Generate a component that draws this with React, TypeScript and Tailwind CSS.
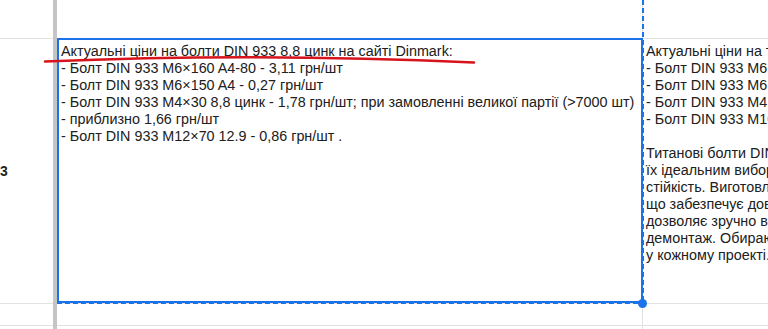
import React from 'react';

const leftLines = [
  'Актуальні ціни на болти DIN 933 8,8 цинк на сайті Dinmark:',
  '- Болт DIN 933 M6×160 A4-80 - 3,11 грн/шт',
  '- Болт DIN 933 M6×150 A4 - 0,27 грн/шт',
  '- Болт DIN 933 M4×30 8,8 цинк - 1,78 грн/шт; при замовленні великої партії (>7000 шт)',
  '- приблизно 1,66 грн/шт',
  '- Болт DIN 933 M12×70 12.9 - 0,86 грн/шт .',
];

const rightLines = [
  'Актуальні ціни на титанові болти DIN 933:',
  '- Болт DIN 933 M6×20 титан - 48,50 грн/шт',
  '- Болт DIN 933 M6×30 титан - 56,20 грн/шт',
  '- Болт DIN 933 M4×12 титан - 21,40 грн/шт',
  '- Болт DIN 933 M10×40 титан - 142,00 грн/шт',
  '',
  'Титанові болти DIN 933 відрізняються високою міцністю та малою вагою, що робить',
  'їх ідеальним вибором для авіації, медицини та хімічної промисловості. Вони мають',
  'стійкість. Виготовлені за стандартом DIN 933, ці болти мають повну різьбу,',
  'що забезпечує довговічне та надійне з\'єднання. Шестигранна головка',
  'дозволяє зручно встановлювати болт гайковим ключем та легко виконувати',
  'демонтаж. Обираючи титанові болти DIN 933, ви отримуєте надійність',
  'у кожному проекті.',
];

const App: React.FC = () => {
  return (
    <div className="relative w-[768px] h-[329px] overflow-hidden bg-white flex font-['Liberation_Sans',Arial,sans-serif] text-[14.35px] leading-[17px] text-[#202020]">
      {/* row headers */}
      <div className="w-[53px] shrink-0 flex flex-col">
        <div className="h-[39px] border-b border-[#e2e2e2]" />
        <div className="h-[265px] border-b border-[#e2e2e2] flex items-center font-bold text-[14px] text-[#1f1f1f]">3</div>
        <div className="h-[22px] border-b border-[#e2e2e2]" />
      </div>

      {/* freeze bar */}
      <div className="w-[4px] shrink-0 bg-[#c5c5c5]" />

      {/* grid */}
      <div className="flex-1 flex flex-col">
        <div className="h-[39px] flex border-b border-[#e2e2e2]">
          <div className="w-[586px] shrink-0 border-r border-[#e2e2e2]" />
          <div className="flex-1" />
        </div>

        <div className="h-[265px] flex border-b border-[#e2e2e2]">
          <div className="w-[586px] shrink-0 border-r border-[#e2e2e2] pl-[4px] pt-[4px] overflow-hidden">
            {leftLines.map((l, i) => (
              <div key={i} className="whitespace-nowrap">{l}</div>
            ))}
          </div>
          <div className="flex-1 pl-[3px] pt-[4px] overflow-hidden">
            {rightLines.map((l, i) => (
              <div key={i} className="whitespace-nowrap h-[17px]">{l}</div>
            ))}
          </div>
        </div>

        <div className="h-[22px] flex border-b border-[#e2e2e2]">
          <div className="w-[586px] shrink-0 border-r border-[#e2e2e2]" />
          <div className="flex-1" />
        </div>
        <div className="flex-1 flex">
          <div className="w-[586px] shrink-0 border-r border-[#e2e2e2]" />
          <div className="flex-1" />
        </div>
      </div>

      {/* selection + copy marquee */}
      <div className="absolute left-[57px] top-[38px] w-[586px] h-[265px] border-2 border-[#1a73e8] pointer-events-none" />
      <div className="absolute left-[642px] top-0 w-[2px] h-[303px] bg-[repeating-linear-gradient(180deg,#1a73e8_0_5px,transparent_5px_8px)]" />
      <div className="absolute left-[57px] top-[302px] w-[586px] h-[2px] bg-[repeating-linear-gradient(90deg,#1a73e8_0_5px,transparent_5px_8px)]" />
      <div className="absolute left-[638px] top-[299px] w-[9px] h-[9px] rounded-full bg-[#1a73e8]" />

      {/* red underline mark */}
      <svg className="absolute left-0 top-0 pointer-events-none" width="768" height="329">
        <path d="M45 61.5 Q258 52.5 474 62.5" stroke="#d7141b" strokeWidth="2.5" fill="none" strokeLinecap="round" />
      </svg>
    </div>
  );
};

export default App;
